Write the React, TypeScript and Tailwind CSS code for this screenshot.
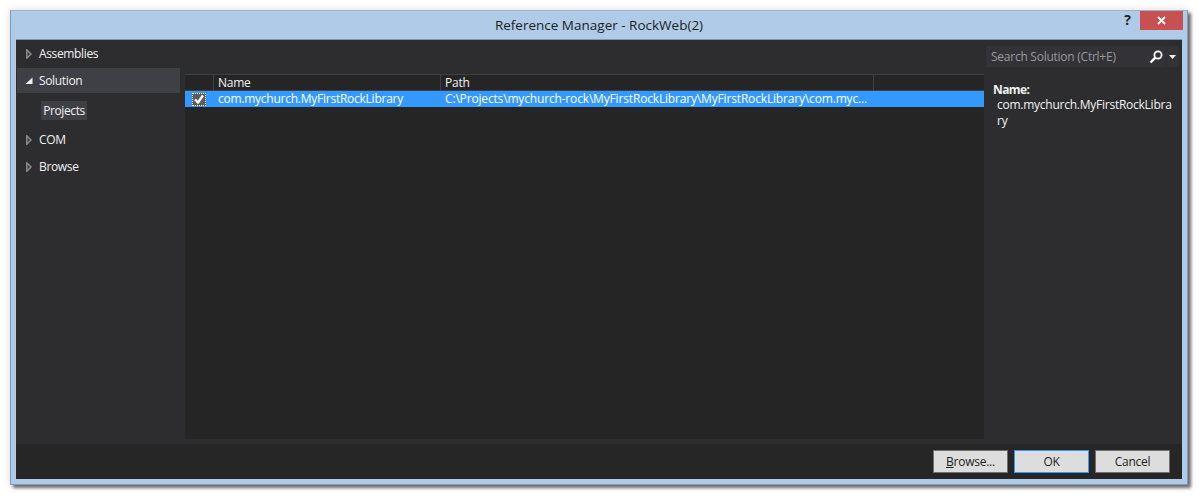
import React from 'react';

const TreeRow = ({ label, open, active }: { label: string; open?: boolean; active?: boolean }) => (
  <div className={`flex h-[25px] w-[163px] items-center ${active ? 'bg-[#3f3f46]' : ''}`}>
    <div className="flex w-[22px] shrink-0 justify-center pl-[2px]">
      {open ? (
        <svg width="8" height="8" viewBox="0 0 8 8">
          <path d="M7.5 0.5V7H0.5Z" fill="#f1f1f1" />
        </svg>
      ) : (
        <svg width="6" height="10" viewBox="0 0 6 10">
          <path d="M0.8 0.8L5 5L0.8 9.2Z" fill="#3a3a3d" stroke="#8a8a8a" strokeWidth="1.5" />
        </svg>
      )}
    </div>
    <span className="tracking-[-0.35px]">{label}</span>
  </div>
);

const FooterButton = ({ children, primary }: { children: React.ReactNode; primary?: boolean }) => (
  <button
    className={`h-[23px] w-[75px] border text-[12px] leading-none text-[#1e1e1e] bg-[#dddddd] ${
      primary ? 'border-[#3399ff]' : 'border-[#707070]'
    }`}
  >
    {children}
  </button>
);

export default function App() {
  return (
    <div className="h-[496px] w-[1199px] overflow-hidden bg-white pl-[10px] pt-[10px] font-['Open_Sans',sans-serif] text-[12px] tracking-[-0.25px] text-[#f1f1f1]">
      <div className="h-[475px] w-[1178px] border border-[#7f9db9] border-t-[#9db3c9] bg-[#afcbe8] shadow-[3px_3px_3px_rgba(0,0,0,0.55),0_0_8px_rgba(0,0,0,0.15)]">
        {/* Title bar */}
        <div className="relative flex h-[28px] items-center justify-center text-[13.5px] tracking-normal text-[#1e1e1e]">
          <span>Reference Manager - RockWeb(2)</span>
          <span className="absolute right-[56px] top-[-2px] text-[14px] font-bold text-[#222222]">?</span>
          <div className="absolute right-[4px] top-0 flex h-[19px] w-[43px] items-center justify-center bg-[#c75050]">
            <svg width="9" height="9" viewBox="0 0 9 9">
              <path d="M1 1L8 8M8 1L1 8" stroke="white" strokeWidth="1.8" />
            </svg>
          </div>
        </div>

        <div className="mx-[5px] flex h-[440px] flex-col border-t border-[#7f96ad] bg-[#2d2d30]">
          <div className="flex min-h-0 flex-1">
            {/* Left tree */}
            <div className="w-[169px] shrink-0 pl-[1px] pt-[1px]">
              <TreeRow label="Assemblies" />
              <div className="mt-[2px]">
                <TreeRow label="Solution" open active />
              </div>
              <div className="mb-[7px] mt-[8px] pl-[24px]">
                <div className="flex h-[19px] w-[46px] items-center justify-center bg-[#3f3f46] tracking-[-0.4px]">Projects</div>
              </div>
              <TreeRow label="COM" />
              <div className="mt-[2px]">
                <TreeRow label="Browse" />
              </div>
            </div>

            {/* Reference list */}
            <div className="flex w-[799px] shrink-0 flex-col pb-[5px] pt-[34px]">
              <div className="flex-1 bg-[#252526]">
                <div className="flex h-[17px] border-y border-[#3f3f46] leading-[16px]">
                  <div className="w-[29px] border-r border-[#3f3f46]" />
                  <div className="w-[227px] border-r border-[#3f3f46] pl-[4px]">Name</div>
                  <div className="w-[433px] border-r border-[#3f3f46] pl-[4px]">Path</div>
                </div>
                <div className="flex h-[16px] items-center bg-[#3399ff] text-white">
                  <div className="flex w-[28px] justify-center pr-[1px]">
                    <div className="flex h-[13px] w-[14px] items-center justify-center border border-dotted border-white bg-[#5c5c5c]">
                      <svg width="12" height="11" viewBox="0 0 12 11">
                        <path d="M2 5.5L5 8.5L10 1.5" fill="none" stroke="white" strokeWidth="2.4" />
                      </svg>
                    </div>
                  </div>
                  <div className="w-[227px] pl-[5px]">com.mychurch.MyFirstRockLibrary</div>
                  <div className="pl-[5px] tracking-[-0.165px]">C:\Projects\mychurch-rock\MyFirstRockLibrary\MyFirstRockLibrary\com.myc...</div>
                </div>
              </div>
            </div>

            {/* Search and details */}
            <div className="flex-1">
              <div className="ml-[2px] mt-[6px] flex h-[21px] w-[192px] items-center bg-[#333337] pl-[5px] text-[#999999]">
                <span className="flex-1">Search Solution (Ctrl+E)</span>
                <div className="flex h-full w-[20px] items-center justify-center">
                  <svg width="14" height="14" viewBox="0 0 14 14">
                    <circle cx="9" cy="5" r="3.6" fill="none" stroke="white" strokeWidth="1.8" />
                    <path d="M6.3 7.7L1.5 12.5" stroke="white" strokeWidth="2.4" />
                  </svg>
                </div>
                <div className="flex h-full w-[12px] items-center justify-center border-l border-[#2d2d30]">
                  <svg width="7" height="4" viewBox="0 0 7 4">
                    <path d="M0 0H7L3.5 4Z" fill="#f1f1f1" />
                  </svg>
                </div>
              </div>
              <div className="mt-[15px] pl-[9px] font-bold leading-[15px] tracking-[-0.6px]">Name:</div>
              <div className="pl-[13px] leading-[16px]">
                com.mychurch.MyFirstRockLibra
                <br />
                ry
              </div>
            </div>
          </div>

          {/* Footer */}
          <div className="flex h-[35px] items-start justify-end gap-[6px] bg-[#262626] pr-[12px] pt-[6px]">
            <FooterButton>
              <u>B</u>rowse...
            </FooterButton>
            <FooterButton primary>OK</FooterButton>
            <FooterButton>Cancel</FooterButton>
          </div>
        </div>
      </div>
    </div>
  );
}
